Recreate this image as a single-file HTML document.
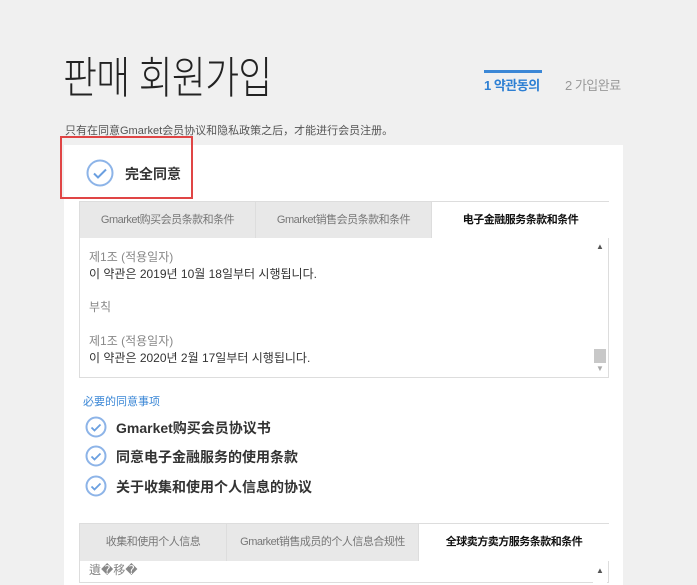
<!DOCTYPE html>
<html><head><meta charset="utf-8"><style>
body{margin:0;width:697px;height:577px;overflow:hidden;background:#f0f0f0;font-family:"Liberation Sans","Noto Sans CJK KR",sans-serif;position:relative;color:#333}
.a{position:absolute;white-space:nowrap}
.panel{position:absolute;left:64px;top:145px;width:559px;height:440px;background:#fff}
.box{position:absolute;border:1px solid #ddd;background:#fff;box-sizing:border-box}
.tab{position:absolute;top:0;height:36px;line-height:36px;text-align:center;font-size:11px;color:#777;background:#e8e8e8;border-right:1px solid #ddd;box-sizing:border-box;font-family:"Liberation Sans","Noto Sans CJK SC",sans-serif;letter-spacing:-0.5px}
.tab.on{background:#fff;color:#111;font-weight:bold;border:none}
.sb{position:absolute;right:1px;width:14px;background:#fff}
.ln{font-size:12px;color:#333}
.gr{color:#888}
.it{font-size:14px;font-weight:bold;color:#333;font-family:"Liberation Sans","Noto Sans CJK SC",sans-serif}
</style></head><body>
<div class="a" style="left:63px;top:42px;font-size:44px;font-weight:300;color:#222;letter-spacing:-1px;transform:scaleX(0.84);transform-origin:left top">판매 회원가입</div>
<div class="a" style="left:484px;top:70px;width:58px;height:3px;background:#3b87d6"></div>
<div class="a" style="left:484px;top:75px;font-size:13px;font-weight:bold;color:#2d7fd3;letter-spacing:-0.5px">1 약관동의</div>
<div class="a" style="left:565px;top:75px;font-size:13px;color:#999;letter-spacing:-0.5px">2 가입완료</div>
<div class="a" style="left:65px;top:122px;font-size:11px;color:#555;font-family:'Liberation Sans','Noto Sans CJK SC',sans-serif">只有在同意Gmarket会员协议和隐私政策之后，才能进行会员注册。</div>
<div class="panel"></div>
<div class="a" style="left:60px;top:136px;width:129px;height:59px;border:2px solid #e04545"></div>
<svg class="a" style="left:86px;top:159px" width="28" height="28"><circle cx="14" cy="14" r="12.5" fill="none" stroke="#8db4e8" stroke-width="2"/><path d="M8 14.5l4 4 8-8" fill="none" stroke="#6a9fe0" stroke-width="2"/></svg>
<div class="a it" style="left:125px;top:164px">完全同意</div>
<div class="box" style="left:79px;top:201px;width:530px;height:177px">
<div class="tab" style="left:0;width:176px">Gmarket购买会员条款和条件</div>
<div class="tab" style="left:176px;width:176px">Gmarket销售会员条款和条件</div>
<div class="tab on" style="left:352px;width:177px">电子金融服务条款和条件</div>
<div class="sb" style="top:36px;height:139px"><div style="position:absolute;top:111px;left:1px;width:12px;height:14px;background:#c8c8c8"></div><div style="position:absolute;top:4px;left:3px;font-size:8px;color:#555">▲</div><div style="position:absolute;top:126px;left:3px;font-size:8px;color:#aaa">▼</div></div>
</div>
<div class="a ln gr" style="left:89px;top:248px">제1조 (적용일자)</div>
<div class="a ln" style="left:89px;top:265px">이 약관은 2019년 10월 18일부터 시행됩니다.</div>
<div class="a ln gr" style="left:89px;top:298px">부칙</div>
<div class="a ln gr" style="left:89px;top:332px">제1조 (적용일자)</div>
<div class="a ln" style="left:89px;top:349px">이 약관은 2020년 2월 17일부터 시행됩니다.</div>
<div class="a" style="left:83px;top:393px;font-size:11px;color:#3b87d6;font-family:'Liberation Sans','Noto Sans CJK SC',sans-serif">必要的同意事项</div>
<svg class="a" style="left:85px;top:416px" width="22" height="22"><circle cx="11" cy="11" r="9.5" fill="none" stroke="#8db4e8" stroke-width="2"/><path d="M6.5 11.5l3 3 6-6" fill="none" stroke="#6a9fe0" stroke-width="1.8"/></svg>
<svg class="a" style="left:85px;top:445px" width="22" height="22"><circle cx="11" cy="11" r="9.5" fill="none" stroke="#8db4e8" stroke-width="2"/><path d="M6.5 11.5l3 3 6-6" fill="none" stroke="#6a9fe0" stroke-width="1.8"/></svg>
<svg class="a" style="left:85px;top:475px" width="22" height="22"><circle cx="11" cy="11" r="9.5" fill="none" stroke="#8db4e8" stroke-width="2"/><path d="M6.5 11.5l3 3 6-6" fill="none" stroke="#6a9fe0" stroke-width="1.8"/></svg>
<div class="a it" style="left:116px;top:418px">Gmarket购买会员协议书</div>
<div class="a it" style="left:116px;top:447px">同意电子金融服务的使用条款</div>
<div class="a it" style="left:116px;top:477px">关于收集和使用个人信息的协议</div>
<div class="box" style="left:79px;top:523px;width:530px;height:60px">
<div class="tab" style="left:0;width:147px;height:37px;line-height:37px">收集和使用个人信息</div>
<div class="tab" style="left:147px;width:192px;height:37px;line-height:37px">Gmarket销售成员的个人信息合规性</div>
<div class="tab on" style="left:339px;width:190px;height:37px;line-height:37px">全球卖方卖方服务条款和条件</div>
<div class="sb" style="top:37px;height:22px"><div style="position:absolute;top:5px;left:3px;font-size:8px;color:#555">▲</div></div>
</div>
<div class="a ln gr" style="left:89px;top:561px;font-family:'Liberation Sans','Noto Sans CJK KR',sans-serif">遺�移�</div>
</body></html>
